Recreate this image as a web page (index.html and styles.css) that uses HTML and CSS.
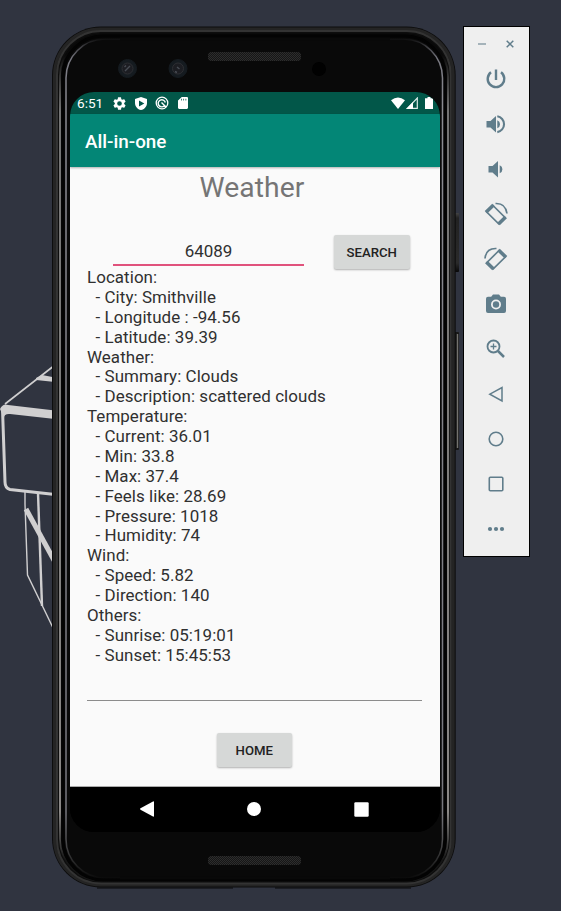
FILE: index.html
```html
<!DOCTYPE html>
<html lang="en">
<head>
<meta charset="utf-8">
<title>All-in-one</title>
<link rel="stylesheet" href="styles.css">
</head>
<body>
<svg class="backdrop" width="561" height="911" viewBox="0 0 561 911" fill="none" stroke="#d0cfd0" aria-hidden="true">
  <path d="M55 365 5 404" stroke-width="1.6"/>
  <path d="M36 378 42 375 55 377.500V382L36 380Z" fill="#d0cfd0" stroke="none"/>
  <path d="M0 409Q3 403 8 405L55 410.500V419L10 414Q4 413.500 4 418Z" fill="#d0cfd0" stroke="none"/>
  <path d="M2.500 409 5 482Q5 488 10 489.500L55 494.500" stroke-width="3"/>
  <path d="M25 492V504L27.500 575 55 632" stroke-width="1.400"/>
  <path d="M38 493 42 606" stroke-width="2.400"/>
  <path d="M26 509 55 562" stroke-width="5"/>
</svg>
<main class="desktop">
  <section class="phone">
    <svg class="shell" width="408" height="864" viewBox="52 26 408 864" fill="none" aria-hidden="true">
      <defs>
        <linearGradient id="edge" x1="0" y1="55" x2="0" y2="860" gradientUnits="userSpaceOnUse">
          <stop offset="0" stop-color="#8e8e8e" stop-opacity="0"/><stop offset=".07" stop-color="#858585"/><stop offset=".94" stop-color="#a09d9b"/><stop offset="1" stop-color="#888" stop-opacity=".1"/>
        </linearGradient>
        <linearGradient id="rim" x1="0" y1="38" x2="0" y2="879" gradientUnits="userSpaceOnUse">
          <stop offset="0" stop-color="#8e8e98" stop-opacity="0"/><stop offset=".025" stop-color="#777780"/><stop offset=".08" stop-color="#8b8b92"/><stop offset=".92" stop-color="#77777e"/><stop offset="1" stop-color="#888" stop-opacity="0"/>
        </linearGradient>
        <linearGradient id="side" x1="0" y1="212" x2="0" y2="272" gradientUnits="userSpaceOnUse">
          <stop stop-color="#4a4a4a"/><stop offset=".1" stop-color="#222"/><stop offset=".85" stop-color="#2a2a2a"/><stop offset="1" stop-color="#080808"/>
        </linearGradient>
        <pattern id="mesh" width="2" height="2" patternUnits="userSpaceOnUse"><rect width="2" height="2" fill="#161616"/><path d="M0 0h1v1H0zM1 1h1v1H1z" fill="#2d2d2d"/></pattern>
      </defs>
      <rect x="454" y="213" width="5" height="59" rx="1" fill="url(#side)"/>
      <rect x="454" y="332" width="5" height="118" rx="1" fill="#181818"/>
      <path d="M457.500 334V448" stroke="#74736f" stroke-width="1.400"/>
      <rect x="52" y="26.500" width="403.700" height="861" rx="49" fill="#0d0d0d"/>
      <rect x="54.500" y="29" width="398.700" height="856" rx="46" stroke="#242424" stroke-width="3"/>
      <rect x="57" y="31" width="393.700" height="852.500" rx="44" stroke="#333" stroke-width="2"/>
      <rect x="59.500" y="33.500" width="389" height="848" rx="42" fill="#090909"/>
      <rect x="60" y="34" width="388" height="847" rx="42" stroke="url(#edge)" stroke-width="1.700"/>
      <rect x="63" y="36" width="382" height="844" rx="40" stroke="#030303" stroke-width="3"/>
      <rect x="66" y="39" width="376.500" height="839" rx="39" stroke="url(#rim)" stroke-width="1.500"/>
      <path d="M120 39H390M120 878H390" stroke="#090909" stroke-width="3"/>
      <path d="M97 888H233M275 888H411" stroke="#080808" stroke-width="1"/>
      <g stroke="#151b20"><circle cx="127.500" cy="68.500" r="9" fill="#151b20"/><circle cx="178" cy="68.500" r="9" fill="#151b20"/></g>
      <g fill="#1c1d22" stroke="#2e2f33"><circle cx="127.500" cy="68.500" r="5.500"/><circle cx="178" cy="68.500" r="5.500"/></g>
      <path d="M125 71 130 66M124.500 67 126 65.500M177 67 179.500 69M175 71.500 177 72.500" stroke="#484c54" stroke-width="1.400"/>
      <circle cx="319" cy="69" r="7" fill="#010101"/>
      <rect x="208" y="52" width="93" height="9" rx="3.500" fill="url(#mesh)"/>
      <rect x="208" y="856" width="93" height="9" rx="3.500" fill="url(#mesh)"/>
    </svg>
    <div class="screen">
      <header class="status">
        <span class="clock">6:51</span>
        <svg width="13" height="13" viewBox="2 2 20 20" fill="#fff"><path d="M19.140 12.940a7.500 7.500 0 0 0 0-1.880l2.030-1.580a.5.5 0 0 0 .12-.61l-1.920-3.320a.5.5 0 0 0-.59-.22l-2.390.96a7 7 0 0 0-1.620-.94L14.410 2.810a.5.5 0 0 0-.48-.41h-3.840a.5.5 0 0 0-.47.41L9.250 5.350a7 7 0 0 0-1.620.94l-2.390-.96a.5.5 0 0 0-.59.22L2.740 8.870a.5.5 0 0 0 .12.61l2.030 1.580a7.500 7.500 0 0 0 0 1.880l-2.030 1.580a.5.5 0 0 0-.12.61l1.920 3.320c.12.220.37.290.59.220l2.390-.96c.5.380 1.030.700 1.620.940l.36 2.540c.05.240.24.410.48.410h3.840c.24 0 .44-.17.47-.41l.36-2.540a7 7 0 0 0 1.620-.94l2.390.96c.22.080.47 0 .59-.22l1.920-3.320a.5.5 0 0 0-.12-.61zM12 15.600a3.600 3.600 0 1 1 0-7.200 3.600 3.600 0 0 1 0 7.200z"/></svg>
        <svg width="12" height="13" viewBox="3 1 18 22" preserveAspectRatio="none" fill="#fff"><path fill-rule="evenodd" d="M12 1 3 4.500V11c0 5.600 3.800 10.700 9 12 5.200-1.300 9-6.400 9-12V4.500zM9 7v10l8-5z"/></svg>
        <svg width="14" height="14" viewBox="0 0 14 14" fill="none" stroke="#fff"><circle cx="7" cy="7" r="5.800" stroke-width="1.300"/><path d="M9.500 9.700A3.600 3.600 0 1 1 10.300 6.500M6.500 6.500 11 11" stroke-width="1.400"/></svg>
        <svg width="10" height="12" viewBox="4 2 16 20" preserveAspectRatio="none" fill="#fff"><path fill-rule="evenodd" d="M18 2h-8L4 8v12c0 1.100.9 2 2 2h12c1.100 0 2-.9 2-2V4c0-1.100-.9-2-2-2zM9 5h1.200v3H9zm3.500 0h1.200v3h-1.200zM16 5h1.200v3H16z"/></svg>
        <span class="signals">
          <svg width="14" height="12" viewBox="0 0 14 12" fill="#fff"><path d="M7 12 0 3.300Q7-2.500 14 3.300Z"/></svg>
          <svg width="12" height="12" viewBox="0 0 12 12"><path d="M11.300 1V11.300H1.500Z" fill="none" stroke="#dcebe8" stroke-width="1.200"/><path d="M0 12 7 5v7Z" fill="#fff"/></svg>
          <svg class="battery" width="8" height="12" viewBox="0 0 8 12" fill="#fff"><path d="M2.500 0h3v1.200H8V12H0V1.200h2.500z"/></svg>
        </span>
      </header>
      <div class="appbar">All-in-one</div>
      <div class="content">
        <h1>Weather</h1>
        <div class="search">
          <div class="field">64089</div>
          <button class="btn">SEARCH</button>
        </div>
        <pre class="report">Location:
  - City: Smithville
  - Longitude : -94.56
  - Latitude: 39.39
Weather:
  - Summary: Clouds
  - Description: scattered clouds
Temperature:
  - Current: 36.01
  - Min: 33.8
  - Max: 37.4
  - Feels like: 28.69
  - Pressure: 1018
  - Humidity: 74
Wind:
  - Speed: 5.82
  - Direction: 140
Others:
  - Sunrise: 05:19:01
  - Sunset: 15:45:53</pre>
        <button class="btn home">HOME</button>
      </div>
      <nav class="navbar">
        <svg width="14" height="16" viewBox="0 0 14 16" fill="#fff"><path d="M13 .5Q14 0 14 1V15Q14 16 13 15.500L.5 8.700Q-.3 8 .5 7.300Z"/></svg>
        <svg width="14" height="14" viewBox="0 0 14 14" fill="#fff"><circle cx="7" cy="7" r="7"/></svg>
        <svg width="15" height="15" viewBox="0 0 15 15" fill="#fff"><rect x=".3" y=".3" width="14.400" height="14.400" rx="1.200"/></svg>
      </nav>
    </div>
  </section>
  <aside class="tools">
    <div class="window">
      <svg width="8" height="8" viewBox="0 0 8 8"><path d="M0 4H8" stroke="#a5b3ba" stroke-width="2"/></svg>
      <svg width="8" height="8" viewBox="0 0 8 8"><path d="M.7.7 7.300 7.300M7.300.7.7 7.300" stroke="#607d8b" stroke-width="1.500"/></svg>
    </div>
    <svg viewBox="0 0 24 24"><path d="M12 2.500V13M7 5.200A8.300 8.300 0 1 0 17 5.200" fill="none" stroke="#607d8b" stroke-width="2.400"/></svg>
    <svg viewBox="0 0 24 24"><path d="M2.500 9v6.500h4l5.500 5V4L6.500 9zM13.300 8.200v8a4.300 4.300 0 0 0 0-8z"/><path d="M13.300 4.300a8 8 0 0 1 0 15.800" fill="none" stroke="#607d8b" stroke-width="2.100"/></svg>
    <svg viewBox="0 0 24 24"><path d="M4.500 9v6.500h4l5.500 5V4L8.500 9zM15.700 8.200v8a4.300 4.300 0 0 0 0-8z"/></svg>
    <svg viewBox="0 0 24 24"><g fill="none" stroke="#607d8b"><path d="m9 3.500 12 12-6.300 6.300L2.500 9.800Z" stroke-width="1.700"/><path d="M9.500 3 2 10.300M21.700 15 14.500 22" stroke-width="3.600"/><path d="M11.500 1.500Q21.500 1 23 11.500" stroke-width="1.700"/></g></svg>
    <svg viewBox="0 0 24 24"><g fill="none" stroke="#607d8b"><path d="M15 3.500 3 15.500l6.300 6.300L21.500 9.800Z" stroke-width="1.700"/><path d="m14.500 3 7.500 7.300M2.300 15l7.200 7" stroke-width="3.600"/><path d="M12.500 1.500Q2 1 1 11.500" stroke-width="1.700"/></g></svg>
    <svg viewBox="0 0 24 24"><path fill-rule="evenodd" d="M9 2.500 7.200 4.700H4a2 2 0 0 0-2 2V19a2 2 0 0 0 2 2h16a2 2 0 0 0 2-2V6.700a2 2 0 0 0-2-2h-3.200L15 2.500zm3 5a5 5 0 1 1 0 10 5 5 0 0 1 0-10z"/><circle cx="12" cy="12.500" r="3.200"/></svg>
    <svg viewBox="0 0 24 24"><g fill="none" stroke="#607d8b"><circle cx="9.500" cy="9.500" r="6" stroke-width="1.800"/><path d="m14 14 6 6" stroke-width="2.500"/><path d="M9.500 6.500v6M6.500 9.500h6" stroke-width="1.300"/></g></svg>
    <svg viewBox="0 0 24 24"><path d="M18 5.500v13.500L5.800 12.200Z" fill="none" stroke="#607d8b" stroke-width="1.500"/></svg>
    <svg viewBox="0 0 24 24"><circle cx="12" cy="12" r="6.800" fill="none" stroke="#607d8b" stroke-width="1.600"/></svg>
    <svg viewBox="0 0 24 24"><rect x="5.300" y="5.300" width="13.500" height="13.500" rx="1" fill="none" stroke="#607d8b" stroke-width="1.600"/></svg>
    <svg viewBox="0 0 24 24"><circle cx="6" cy="12" r="2.100"/><circle cx="12" cy="12" r="2.100"/><circle cx="18" cy="12" r="2.100"/></svg>
  </aside>
</main>
</body>
</html>
```
FILE: styles.css
```css
* { box-sizing: border-box; }
body {
  margin: 0;
  width: 561px;
  height: 911px;
  overflow: hidden;
  background: #303440;
  font-family: Roboto, sans-serif;
}
svg { display: block; flex: none; }
.backdrop { position: absolute; top: 0; left: 0; }
.desktop {
  position: relative;
  display: flex;
  align-items: flex-start;
  padding: 26px 0 0 52px;
}
.phone { position: relative; width: 411px; height: 864px; padding: 66px 0 0 18px; }
.shell { position: absolute; top: 0; left: 0; }
.screen {
  position: relative;
  display: flex;
  flex-direction: column;
  width: 370px;
  height: 740px;
  overflow: hidden;
  border-radius: 24px;
  background: #000;
}
.status {
  display: flex;
  align-items: center;
  height: 22px;
  padding: 0 7px;
  background: #025749;
  color: #fff;
}
.clock { width: 36px; font-size: 13.600px; line-height: 22px; }
.status > svg { margin-right: 9px; }
.status > svg:nth-of-type(2) { margin-right: 8px; }
.signals { display: flex; gap: 1px; margin-left: auto; }
.battery { margin-left: 6px; }
.appbar {
  position: relative;
  height: 53px;
  padding-left: 15px;
  background: #038676;
  color: #fff;
  font-size: 18.840px;
  font-weight: 500;
  line-height: 56px;
  box-shadow: 0 1px 2px rgba(0, 0, 0, .3);
}
.content {
  flex: 1;
  padding: 0 18px 0 17px;
  border-bottom: 1px solid #aaa;
  background: #fafafa;
}
h1 {
  margin: 4px 0 0;
  height: 34px;
  color: #757575;
  font-size: 28.260px;
  font-weight: 400;
  line-height: 34px;
  letter-spacing: .1px;
  text-align: center;
  text-indent: -5px;
}
.search { display: flex; gap: 30px; padding: 30px 0 0 26px; }
.field {
  width: 191px;
  height: 31px;
  border-bottom: 2px solid #e0527c;
  color: #303030;
  font-size: 16.960px;
  line-height: 33px;
  text-align: center;
}
.btn {
  width: 75.500px;
  height: 34px;
  padding: 0;
  border: 0;
  border-radius: 2px;
  background: #d6d8d7;
  color: #222;
  font: 500 13.190px/36px Roboto, sans-serif;
  box-shadow: 0 1px 2px rgba(0, 0, 0, .3);
}
.report {
  height: 433px;
  margin: -1px 0 0;
  border-bottom: 1px solid #8c8c8c;
  color: #303030;
  font: 16.960px/19.880px Roboto, sans-serif;
  letter-spacing: .06px;
}
.home { display: block; margin: 32px 0 0 129.500px; line-height: 35px; }
.navbar {
  display: flex;
  align-items: center;
  justify-content: space-between;
  height: 45px;
  padding: 0 71px 1px 70px;
  background: #000;
}
.tools {
  display: flex;
  flex-direction: column;
  align-items: center;
  width: 67px;
  height: 531px;
  padding-right: 1px;
  border: 1px solid #000;
  background: #efefef;
}
.window {
  display: flex;
  gap: 20px;
  height: 29px;
  padding-top: 13px;
}
.tools > svg {
  width: 24px;
  height: 24px;
  margin: 11px 0 10px;
  fill: #607d8b;
}
```
